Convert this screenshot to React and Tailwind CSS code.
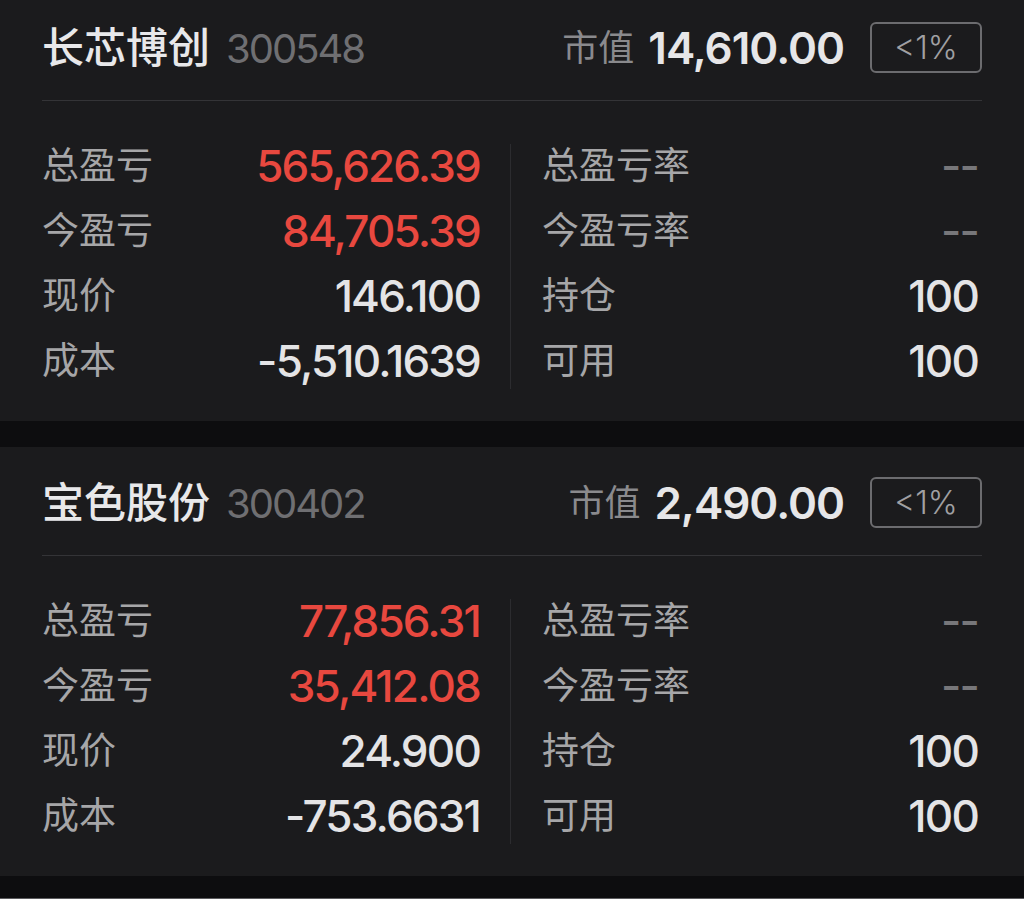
const stocks = [
  {
    name: "长芯博创",
    code: "300548",
    mv: "14,610.00",
    pct: "<1%",
    total: "565,626.39",
    today: "84,705.39",
    price: "146.100",
    cost: "-5,510.1639",
    hold: "100",
    avail: "100",
  },
  {
    name: "宝色股份",
    code: "300402",
    mv: "2,490.00",
    pct: "<1%",
    total: "77,856.31",
    today: "35,412.08",
    price: "24.900",
    cost: "-753.6631",
    hold: "100",
    avail: "100",
  },
];

function Row({ label, value, red, dim }) {
  return (
    <div className="flex items-center justify-between h-[65px]">
      <span className="text-[37px] leading-none text-[#a6a6a8]">{label}</span>
      <span
        className={
          "text-[44px] leading-none font-medium tracking-[-1.8px] " +
          (red ? "text-[#e8483f]" : dim ? "text-[#77777a]" : "text-[#e4e4e6]")
        }
      >
        {value}
      </span>
    </div>
  );
}

function StockCard({ s }) {
  return (
    <div className="bg-[#1b1b1d] h-[429px] px-[42px] pt-[30px]">
      <div className="flex items-center justify-between h-[51px]">
        <div className="flex items-baseline">
          <span className="text-[42px] leading-none font-medium text-[#e8e8ea]">
            {s.name}
          </span>
          <span className="ml-[16px] text-[40px] leading-none tracking-[-2px] text-[#6f6f72]">
            {s.code}
          </span>
        </div>
        <div className="flex items-center">
          <span className="text-[36px] leading-none text-[#8a8a8d]">市值</span>
          <span className="ml-[14px] text-[44px] leading-none font-semibold tracking-[-1px] text-[#e6e6e8]">
            {s.mv}
          </span>
          <span className="ml-[26px] w-[112px] h-[51px] rounded-[6px] border-2 border-[#6c6c6f] flex items-center justify-center text-[32px] leading-none font-light text-[#a0a0a3]">
            {s.pct}
          </span>
        </div>
      </div>
      <div className="mt-[27px] h-px bg-[#343437]" />
      <div className="flex mt-[32px]">
        <div className="w-[438px] flex flex-col">
          <Row label="总盈亏" value={s.total} red />
          <Row label="今盈亏" value={s.today} red />
          <Row label="现价" value={s.price} />
          <Row label="成本" value={s.cost} />
        </div>
        <div className="ml-[30px] w-px bg-[#2c2c2f] mt-[11px] mb-[4px]" />
        <div className="ml-[31px] w-[436px] flex flex-col">
          <Row label="总盈亏率" value="--" dim />
          <Row label="今盈亏率" value="--" dim />
          <Row label="持仓" value={s.hold} />
          <Row label="可用" value={s.avail} />
        </div>
      </div>
    </div>
  );
}

export default function App() {
  return (
    <div
      className="w-[1024px] h-[899px] overflow-hidden bg-[#0d0d0f] flex flex-col"
      style={{ fontFamily: "Inter, 'Noto Sans CJK SC', sans-serif" }}
    >
      <div className="-mt-[8px] flex flex-col gap-[26px]">
        {stocks.map((s) => (
          <StockCard key={s.code} s={s} />
        ))}
      </div>
      <div className="mt-auto h-px bg-[#5c5c5f]" />
    </div>
  );
}
